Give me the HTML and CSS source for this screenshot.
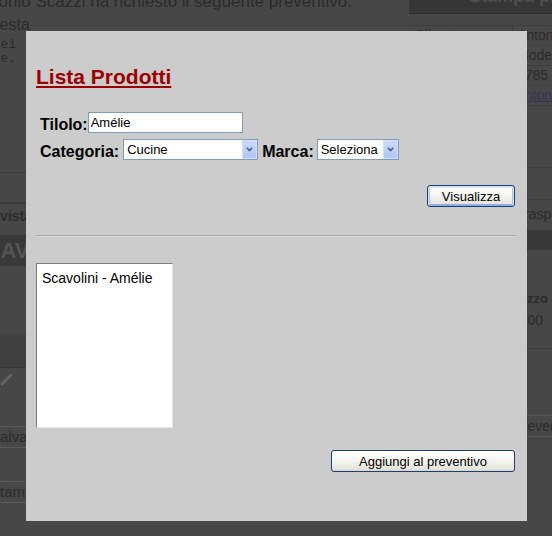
FILE: index.html
```html
<!DOCTYPE html>
<html lang="it">
<head>
<meta charset="utf-8">
<title>Preventivo - Lista Prodotti</title>
<link rel="stylesheet" href="styles.css">
</head>
<body>
<div class="page">
  <div class="main-col">
    <p class="intro">Antonio Scazzi ha richiesto il seguente preventivo:</p>
    <h3 class="req">Richiesta</h3>
    <div class="notes">
      <div class="note-line"><span>Vorrei un preventivo per la cucina dei</span></div>
      <div class="note-line"><span>miei sogni, con consegna a domicilio, grazie de.</span></div>
    </div>
    <div class="block-a"></div>
    <div class="vista">Anteprima vista prodotti</div>
    <div class="band">LAVORAZIONE</div>
    <div class="photo"></div>
    <div class="pencil"><svg width="14" height="14" viewBox="0 0 14 14"><path d="M2 12 L11 3" stroke="#666" stroke-width="2.5" stroke-linecap="round"/></svg></div>
    <div class="bg-btn">Salva modifiche</div>
    <div class="bg-btn second">Stampa</div>
  </div>
  <div class="side-col">
    <div class="print"><span class="print-label">Stampa preventivo</span></div>
    <div class="info">
      <div class="info-row"><span>Cliente</span><span>Antonio Scazzi</span></div>
      <div class="info-row"><span>Città</span><span>Modena</span></div>
      <div class="info-row"><span>Telefono</span><span>0785 123456</span></div>
      <div class="info-row"><span>Email</span><span class="bg-link">antonio.scazzi@mail.it</span></div>
    </div>
    <div class="side-block"></div>
    <div class="trasp">Trasporto incluso</div>
    <div class="side-band"></div>
    <div class="prezzo">Prezzo</div>
    <div class="amount"><span>€ 4.500,00</span></div>
    <div class="side-line"></div>
    <div class="side-btn">preventivo</div>
  </div>
</div>

<div class="overlay">
  <div class="modal" role="dialog" aria-label="Lista Prodotti">
    <h2 class="modal-title">Lista Prodotti</h2>
    <form class="filters">
      <div class="row">
        <label class="lbl" for="titolo">Tilolo:</label>
        <input id="titolo" class="text-input" type="text" value="Amélie" autofocus>
      </div>
      <div class="row">
        <label class="lbl" for="categoria">Categoria:</label>
        <span class="select cat">
          <select id="categoria"><option>Cucine</option></select>
          <span class="select-arrow"><svg width="7" height="5" viewBox="0 0 7 5"><polyline points="0.8,0.8 3.5,3.6 6.2,0.8" fill="none" stroke="#4a5d85" stroke-width="1.6"/></svg></span>
        </span>
        <label class="lbl lbl-marca" for="marca">Marca:</label>
        <span class="select brand">
          <select id="marca"><option>Seleziona</option></select>
          <span class="select-arrow"><svg width="7" height="5" viewBox="0 0 7 5"><polyline points="0.8,0.8 3.5,3.6 6.2,0.8" fill="none" stroke="#4a5d85" stroke-width="1.6"/></svg></span>
        </span>
      </div>
      <div class="actions">
        <button type="button" class="btn btn-default btn-view">Visualizza</button>
      </div>
    </form>
    <div class="divider"></div>
    <div class="listbox" role="listbox">
      <div class="option" role="option">Scavolini - Amélie</div>
    </div>
    <div class="actions bottom">
      <button type="button" class="btn btn-add">Aggiungi al preventivo</button>
    </div>
  </div>
</div>
</body>
</html>
```
FILE: styles.css
```css
html, body {
  margin: 0;
  padding: 0;
}
body {
  background: #474747;
  overflow: hidden;
  font-family: "Liberation Sans", Arial, sans-serif;
}

/* ---------- dimmed page behind the dialog ---------- */
.page {
  display: grid;
  grid-template-columns: 409px 143px;
  height: 536px;
  overflow: hidden;
  color: #2b2b2b;
}
.main-col, .side-col {
  min-width: 0;
}
.intro {
  margin: -7px 0 0;
  font-size: 17px;
  line-height: 17px;
  white-space: nowrap;
  text-indent: -27px;
}
.req {
  margin: 6px 0 0;
  font-size: 16px;
  font-weight: normal;
  line-height: 18px;
  white-space: nowrap;
  text-indent: -36px;
}
.notes {
  margin-top: 4px;
  font-family: "Liberation Mono", monospace;
  font-size: 13px;
  line-height: 14px;
}
.note-line {
  display: flex;
  justify-content: flex-end;
  width: 16px;
  white-space: nowrap;
}
.block-a {
  margin-top: 106px;
  height: 29px;
  border-top: 1px solid #3b3b3b;
  border-bottom: 2px solid #3b3b3b;
}
.vista {
  margin-top: 4px;
  font-size: 14px;
  font-weight: bold;
  line-height: 16px;
  white-space: nowrap;
  text-indent: -73px;
}
.band {
  margin-top: 11px;
  height: 31px;
  background: #393939;
  color: #545454;
  font-size: 22px;
  font-weight: bold;
  line-height: 31px;
  white-space: nowrap;
  text-indent: -13px;
}
.photo {
  margin-top: 68px;
  height: 33px;
  background: #404040;
  border-bottom: 1px solid #363636;
}
.pencil {
  margin-top: 4px;
  height: 14px;
}
.pencil svg {
  display: block;
}
.bg-btn {
  margin-top: 40px;
  width: 120px;
  height: 20px;
  border: 1px solid #5a5a5a;
  border-left: none;
  font-size: 15px;
  line-height: 20px;
  white-space: nowrap;
  text-indent: -10px;
  overflow: hidden;
}
.bg-btn.second {
  margin-top: 33px;
}

.print {
  height: 13px;
  background: #363636;
  border-bottom: 1px solid #2d2d2d;
  overflow: hidden;
}
.print-label {
  display: block;
  margin-top: -13px;
  padding-left: 60px;
  color: #4e4e4e;
  font-size: 18px;
  font-weight: bold;
  line-height: 18px;
  white-space: nowrap;
}
.info {
  margin-top: 11px;
  border-top: 1px solid #3c3c3c;
}
.info-row {
  display: grid;
  grid-template-columns: 103px 1fr;
  height: 19px;
  border-bottom: 1px solid #404040;
  font-size: 14px;
  line-height: 19px;
  white-space: nowrap;
}
.info-row span:last-child {
  padding-left: 4px;
  border-left: 1px solid #3c3c3c;
}
.info-row span:first-child {
  padding-left: 6px;
}
.bg-link {
  color: #35355c;
  text-decoration: underline;
}
.side-block {
  margin-top: 61px;
  height: 31px;
  border-top: 1px solid #3c3c3c;
  border-bottom: 1px solid #3c3c3c;
}
.trasp {
  margin-top: 6px;
  padding-left: 107px;
  font-size: 14px;
  line-height: 16px;
  white-space: nowrap;
}
.side-band {
  margin-top: 8px;
  height: 20px;
  background: #393939;
}
.prezzo {
  margin-top: 42px;
  padding-left: 97px;
  font-size: 13px;
  font-weight: bold;
  line-height: 14px;
  white-space: nowrap;
}
.amount {
  display: flex;
  justify-content: flex-end;
  width: 134px;
  margin-top: 6px;
  font-size: 14px;
  line-height: 16px;
  white-space: nowrap;
}
.side-line {
  margin-top: 20px;
  border-top: 1px solid #3c3c3c;
}
.side-btn {
  margin: 66px 0 0 95px;
  height: 20px;
  padding-left: 10px;
  border: 1px solid #595959;
  border-right: none;
  font-size: 14px;
  line-height: 20px;
  white-space: nowrap;
}

/* ---------- dialog ---------- */
.overlay {
  position: fixed;
  inset: 0;
}
.modal {
  position: absolute;
  left: 26px;
  top: 31px;
  width: 501px;
  height: 490px;
  box-sizing: border-box;
  padding: 0 12px 0 10px;
  background: #cccccc;
  color: #000;
}
.modal-title {
  margin: 34px 0 0;
  font-size: 21px;
  font-weight: bold;
  line-height: 24px;
  color: #9b0000;
  text-decoration: underline;
}
.filters {
  margin: 23px 0 0;
  padding-left: 4px;
}
.row {
  display: flex;
  align-items: center;
  height: 21px;
}
.row + .row {
  margin-top: 6px;
}
.lbl {
  margin-top: 4px;
  font-size: 16px;
  font-weight: bold;
  line-height: 18px;
  white-space: nowrap;
}
.text-input {
  margin-left: 0;
  width: 155px;
  height: 21px;
  box-sizing: border-box;
  padding: 0 2px;
  border: 1px solid #7f9db9;
  background: #fff;
  font-family: "Liberation Sans", Arial, sans-serif;
  font-size: 13px;
  color: #000;
  outline: none;
  caret-color: #000;
}
.select {
  position: relative;
  display: inline-block;
  height: 21px;
  margin-left: 4px;
}
.select select {
  appearance: none;
  -webkit-appearance: none;
  display: block;
  height: 21px;
  box-sizing: border-box;
  margin: 0;
  padding: 0 18px 0 3px;
  border: 1px solid #7f9db9;
  border-radius: 0;
  background: #fff;
  font-family: "Liberation Sans", Arial, sans-serif;
  font-size: 13px;
  color: #000;
}
.cat select {
  width: 135px;
}
.brand select {
  width: 82px;
}
.lbl-marca {
  margin-left: 4px;
}
.brand {
  margin-left: 3px;
}
.select-arrow {
  position: absolute;
  top: 1px;
  right: 1px;
  bottom: 1px;
  width: 15px;
  box-sizing: border-box;
  border: 1px solid #d3dffb;
  background: linear-gradient(#c9d8fc, #b2c6f5);
  display: flex;
  align-items: center;
  justify-content: center;
  pointer-events: none;
}
.actions {
  display: flex;
  justify-content: flex-end;
  margin-top: 25px;
}
.btn {
  height: 22px;
  box-sizing: border-box;
  padding: 0;
  border: 1px solid #1c3f72;
  border-radius: 3px;
  background: linear-gradient(#ffffff 0%, #f4f4f0 50%, #e6e4dc 90%, #d8d4c8 100%);
  font-family: "Liberation Sans", Arial, sans-serif;
  font-size: 13px;
  color: #000;
}
.btn-default {
  box-shadow: inset 0 1px 0 1px #d6e6fd, inset 2px 0 0 0 #a7c2f0, inset -2px 0 0 0 #a7c2f0, inset 0 -2px 0 0 #8daee8;
}
.btn-view {
  width: 88px;
}
.btn-add {
  width: 184px;
}
.divider {
  margin: 28px -1px 0 0;
  border-top: 1px solid #aca899;
  border-bottom: 1px solid #d9d8d2;
}
.listbox {
  margin-top: 26px;
  width: 137px;
  height: 165px;
  box-sizing: border-box;
  padding: 6px 5px;
  border: 1px solid;
  border-color: #7c7c7c #e4e3dd #e4e3dd #7c7c7c;
  background: #fff;
}
.option {
  font-size: 14px;
  line-height: 16px;
  white-space: nowrap;
}
.actions.bottom {
  margin-top: 22px;
}
```
